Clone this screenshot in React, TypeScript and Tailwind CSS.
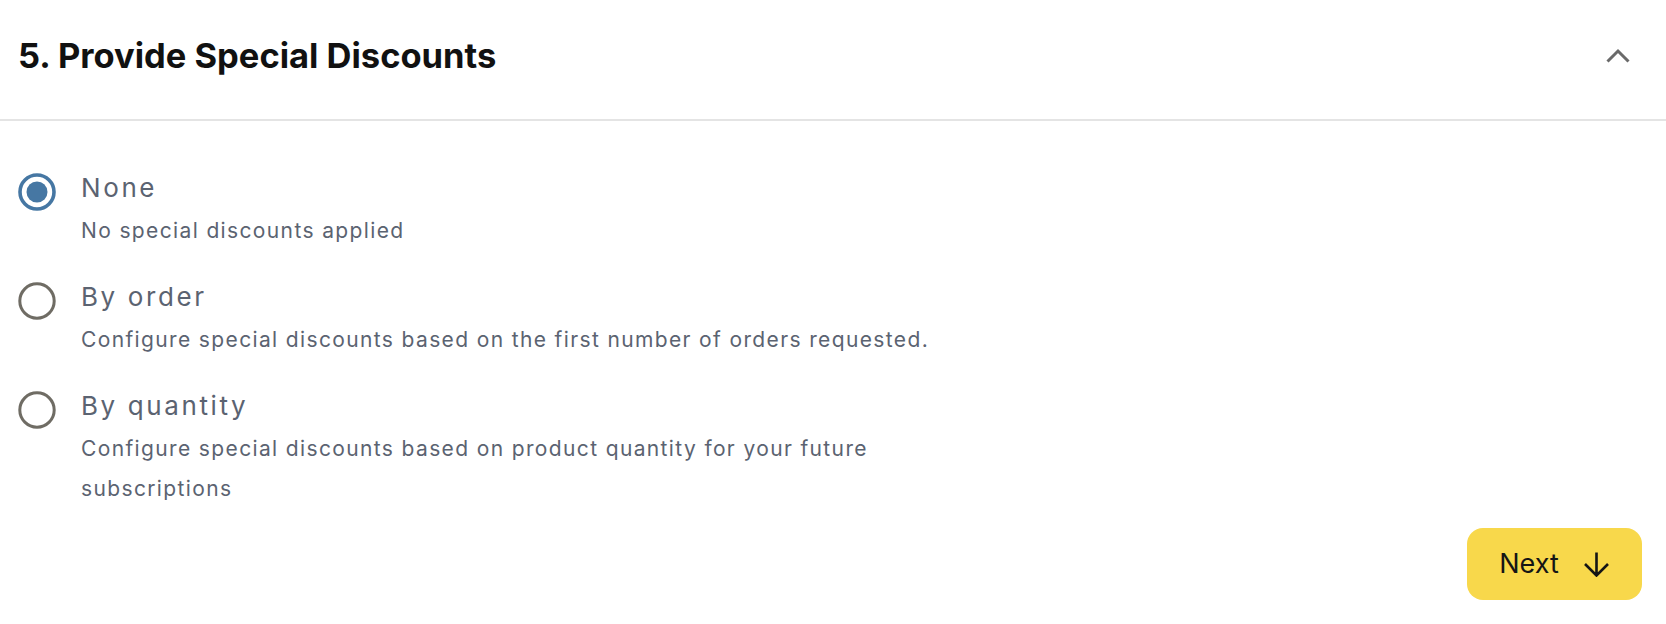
import React from "react";

function Radio({ checked }: { checked: boolean }) {
  return (
    <svg width="38" height="38" viewBox="0 0 38 38" className="mt-[6px] shrink-0">
      {checked ? (
        <>
          <circle cx="19" cy="19" r="17" fill="none" stroke="#4677a3" strokeWidth="3.6" />
          <circle cx="19" cy="19" r="10.5" fill="#4677a3" />
        </>
      ) : (
        <circle cx="19" cy="19" r="17.2" fill="none" stroke="#6f6c64" strokeWidth="3" />
      )}
    </svg>
  );
}

function Option({ checked, title, desc }: { checked: boolean; title: string; desc: string }) {
  return (
    <div className="flex items-start gap-[25px]">
      <Radio checked={checked} />
      <div className="flex flex-col">
        <div className="text-[26px] leading-[42px] tracking-[0.1em] text-[#5b6371]">{title}</div>
        <div className="mt-[2px] max-w-[890px] text-[21px] leading-[40px] tracking-[0.065em] text-[#5b6371]">
          {desc}
        </div>
      </div>
    </div>
  );
}

export default function App() {
  return (
    <div className="w-full min-h-[624px] bg-white" style={{ fontFamily: "Inter, 'Noto Sans', sans-serif" }}>
      <div className="flex items-start justify-between h-[121px] pt-[36px] pl-[18px] pr-[36px] border-b-2 border-[#e4e4e4]">
        <h2 className="text-[34.5px] leading-[40px] font-bold text-[#111111]">5. Provide Special Discounts</h2>
        <svg width="24" height="15" viewBox="0 0 24 15" className="mt-[12px]">
          <polyline points="1.5,13.5 12,3 22.5,13.5" fill="none" stroke="#6a6a6a" strokeWidth="3" />
        </svg>
      </div>
      <div className="flex flex-col gap-[25px] pt-[46px] pl-[18px]">
        <Option checked={true} title="None" desc="No special discounts applied" />
        <Option
          checked={false}
          title="By order"
          desc="Configure special discounts based on the first number of orders requested."
        />
        <Option
          checked={false}
          title="By quantity"
          desc="Configure special discounts based on product quantity for your future subscriptions"
        />
      </div>
      <div className="flex justify-end pr-[24px] pt-[19px] pb-[22px]">
        <button className="flex items-center justify-center gap-[24px] w-[175px] h-[72px] rounded-[16px] bg-[#f8d84b] text-[27px] text-[#151515]">
          <span>Next</span>
          <svg width="27" height="26" viewBox="0 0 27 26">
            <path d="M13.5 1.5V24.5M2 13L13.5 24.5L25 13" fill="none" stroke="#151515" strokeWidth="2.6" />
          </svg>
        </button>
      </div>
    </div>
  );
}
